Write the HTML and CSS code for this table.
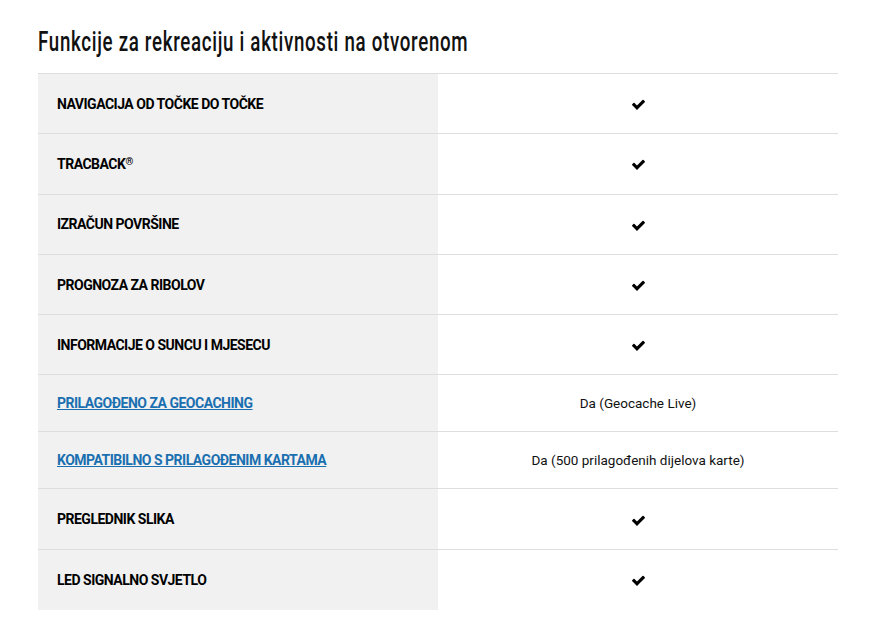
FILE: index.html
```html
<!DOCTYPE html>
<html lang="hr">
<head>
<meta charset="utf-8">
<title>Funkcije za rekreaciju</title>
<link rel="stylesheet" href="styles.css">
</head>
<body>
<section class="specs">
  <h2 class="specs-title">Funkcije za rekreaciju i aktivnosti na otvorenom</h2>
  <table class="spec-table">
    <tbody>
      <tr class="row-icon"><th>NAVIGACIJA OD TOČKE DO TOČKE</th><td><svg class="check" viewBox="0 0 1792 1792"><path d="M1671 566q0 40-28 68l-724 724-136 136q-28 28-68 28t-68-28l-136-136-362-362q-28-28-28-68t28-68l136-136q28-28 68-28t68 28l294 295 656-657q28-28 68-28t68 28l136 136q28 28 28 68z"/></svg></td></tr>
      <tr class="row-icon"><th>TRACBACK<sup>®</sup></th><td><svg class="check" viewBox="0 0 1792 1792"><path d="M1671 566q0 40-28 68l-724 724-136 136q-28 28-68 28t-68-28l-136-136-362-362q-28-28-28-68t28-68l136-136q28-28 68-28t68 28l294 295 656-657q28-28 68-28t68 28l136 136q28 28 28 68z"/></svg></td></tr>
      <tr class="row-icon"><th>IZRAČUN POVRŠINE</th><td><svg class="check" viewBox="0 0 1792 1792"><path d="M1671 566q0 40-28 68l-724 724-136 136q-28 28-68 28t-68-28l-136-136-362-362q-28-28-28-68t28-68l136-136q28-28 68-28t68 28l294 295 656-657q28-28 68-28t68 28l136 136q28 28 28 68z"/></svg></td></tr>
      <tr class="row-icon"><th>PROGNOZA ZA RIBOLOV</th><td><svg class="check" viewBox="0 0 1792 1792"><path d="M1671 566q0 40-28 68l-724 724-136 136q-28 28-68 28t-68-28l-136-136-362-362q-28-28-28-68t28-68l136-136q28-28 68-28t68 28l294 295 656-657q28-28 68-28t68 28l136 136q28 28 28 68z"/></svg></td></tr>
      <tr class="row-icon"><th>INFORMACIJE O SUNCU I MJESECU</th><td><svg class="check" viewBox="0 0 1792 1792"><path d="M1671 566q0 40-28 68l-724 724-136 136q-28 28-68 28t-68-28l-136-136-362-362q-28-28-28-68t28-68l136-136q28-28 68-28t68 28l294 295 656-657q28-28 68-28t68 28l136 136q28 28 28 68z"/></svg></td></tr>
      <tr class="row-text"><th><a href="#">PRILAGOĐENO ZA GEOCACHING</a></th><td>Da (Geocache Live)</td></tr>
      <tr class="row-text"><th><a href="#">KOMPATIBILNO S PRILAGOĐENIM KARTAMA</a></th><td>Da (500 prilagođenih dijelova karte)</td></tr>
      <tr class="row-icon"><th>PREGLEDNIK SLIKA</th><td><svg class="check" viewBox="0 0 1792 1792"><path d="M1671 566q0 40-28 68l-724 724-136 136q-28 28-68 28t-68-28l-136-136-362-362q-28-28-28-68t28-68l136-136q28-28 68-28t68 28l294 295 656-657q28-28 68-28t68 28l136 136q28 28 28 68z"/></svg></td></tr>
      <tr class="row-icon last"><th>LED SIGNALNO SVJETLO</th><td><svg class="check" viewBox="0 0 1792 1792"><path d="M1671 566q0 40-28 68l-724 724-136 136q-28 28-68 28t-68-28l-136-136-362-362q-28-28-28-68t28-68l136-136q28-28 68-28t68 28l294 295 656-657q28-28 68-28t68 28l136 136q28 28 28 68z"/></svg></td></tr>
    </tbody>
  </table>
</section>
</body>
</html>
```
FILE: styles.css
```css
html, body {
  margin: 0;
  padding: 0;
  background: #fff;
}
body {
  font-family: Roboto, "Liberation Sans", sans-serif;
  color: #000;
}
.specs {
  padding: 27px 49px 0 38px;
}
.specs-title {
  margin: 0 0 15px 0;
  font-family: Roboto, "DejaVu Sans", sans-serif;
  font-weight: 500;
  font-size: 27px;
  line-height: 31px;
  letter-spacing: 1px;
  color: #111;
  white-space: nowrap;
  transform: scaleX(0.693);
  transform-origin: left center;
}
.spec-table {
  width: 800px;
  border-collapse: collapse;
  border-top: 1px solid #dedede;
}
.spec-table th {
  width: 400px;
  box-sizing: border-box;
  background: #f1f1f1;
  text-align: left;
  font-weight: 700;
  font-size: 14px;
  letter-spacing: -0.5px;
  padding: 0 19px;
  line-height: 16px;
  color: #000;
}
.spec-table td {
  text-align: center;
  font-size: 13.5px;
  color: #111;
  line-height: 16px;
  padding: 0 10px;
}
.spec-table tr {
  border-bottom: 1px solid #dedede;
}
.spec-table tr.last {
  border-bottom: none;
}
.row-icon th, .row-icon td {
  height: 60.3px;
  box-sizing: border-box;
}
.row-text th, .row-text td {
  height: 57px;
  box-sizing: border-box;
}
.spec-table sup {
  font-size: 10px;
  vertical-align: 4px;
  line-height: 0;
}
.spec-table a {
  color: #1a6fb0;
  text-decoration: underline;
}
.check {
  width: 15px;
  height: 15px;
  display: inline-block;
  vertical-align: middle;
  fill: #000;
}
```
